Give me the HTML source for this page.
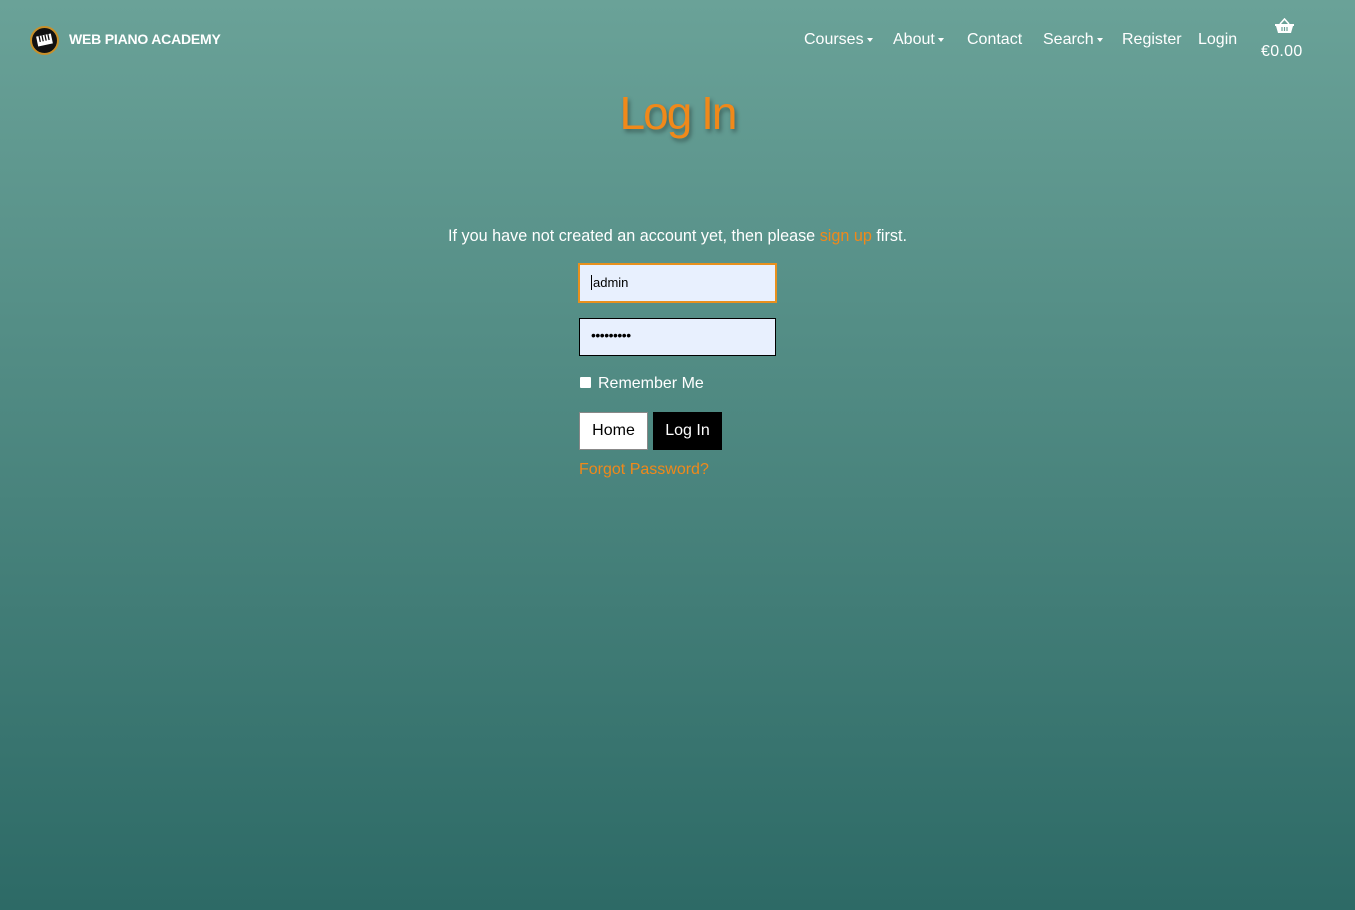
<!DOCTYPE html>
<html><head><meta charset="utf-8"><style>
html,body{margin:0;padding:0;}
body{width:1355px;height:910px;overflow:hidden;background:linear-gradient(#6aa298 0%,#2d6a66 100%);font-family:"Liberation Sans",sans-serif;color:#fff;position:relative;}
.a{position:absolute;white-space:nowrap;}
.nav{font-size:16px;top:31px;}
.caret{display:inline-block;border-top:4px solid #fff;border-left:3.5px solid transparent;border-right:3.5px solid transparent;vertical-align:middle;margin-left:3px;}
</style></head><body>
<svg class="a" style="left:30px;top:26px" width="29" height="29" viewBox="0 0 29 29">
<circle cx="14.5" cy="14.5" r="13.5" fill="#111" stroke="#c8902a" stroke-width="2"/>
<rect x="7" y="9" width="15" height="10" fill="#fff" transform="rotate(-12 14.5 14)"/>
<g stroke="#111" stroke-width="1.3" transform="rotate(-12 14.5 14)"><line x1="10" y1="9" x2="10" y2="15"/><line x1="13" y1="9" x2="13" y2="15"/><line x1="16" y1="9" x2="16" y2="15"/><line x1="19" y1="9" x2="19" y2="15"/></g>
</svg>
<div class="a" style="left:69px;top:31px;font-weight:bold;font-size:14px;letter-spacing:-0.2px">WEB PIANO ACADEMY</div>
<div class="a nav" style="left:804px">Courses<span class="caret"></span></div>
<div class="a nav" style="left:893px">About<span class="caret"></span></div>
<div class="a nav" style="left:967px">Contact</div>
<div class="a nav" style="left:1043px">Search<span class="caret"></span></div>
<div class="a nav" style="left:1122px">Register</div>
<div class="a nav" style="left:1198px">Login</div>
<svg class="a" style="left:1275px;top:18px" width="19" height="16" viewBox="0 0 19 16"><path d="M5 6 L9.5 1 L14 6" stroke="#fff" stroke-width="1.6" fill="none"/><path d="M0 6 H19 V8 H18 L16 15 H3 L1 8 H0Z" fill="#fff"/><g stroke="#6aa298" stroke-width="1.2"><line x1="7" y1="9" x2="7" y2="13"/><line x1="9.5" y1="9" x2="9.5" y2="13"/><line x1="12" y1="9" x2="12" y2="13"/></g></svg>
<div class="a" style="left:1261px;top:43px;font-size:16px;letter-spacing:0.3px">€0.00</div>
<div class="a" style="left:0;width:1355px;text-align:center;top:86px;font-size:46px;color:#f0891a;text-shadow:2px 3px 4px rgba(0,0,0,.35);letter-spacing:-2px">Log In</div>
<div class="a" style="left:0;width:1355px;text-align:center;top:227px;font-size:16.2px">If you have not created an account yet, then please <span style="color:#f0891a">sign up</span> first.</div>
<div class="a" style="left:578px;top:263px;width:195px;height:36px;background:#e8f0fe;border:2px solid #e8901d"></div>
<div class="a" style="left:591px;top:275px;font-size:13px;color:#000;border-left:1px solid #000;padding-left:1px">admin</div>
<div class="a" style="left:579px;top:318px;width:195px;height:36px;background:#e8f0fe;border:1px solid #000"></div>
<div class="a" style="left:591px;top:327px;font-size:14px;color:#000;letter-spacing:-0.5px">•••••••••</div>
<div class="a" style="left:580px;top:377px;width:11px;height:11px;background:#fff;border-radius:1px"></div>
<div class="a" style="left:598px;top:375px;font-size:16px">Remember Me</div>
<div class="a" style="left:579px;top:412px;width:67px;height:36px;background:#fff;border:1px solid #888;color:#000;font-size:16px;line-height:36px;text-align:center">Home</div>
<div class="a" style="left:653px;top:412px;width:69px;height:38px;background:#000;color:#fff;font-size:16px;line-height:38px;text-align:center">Log In</div>
<div class="a" style="left:579px;top:461px;font-size:16px;color:#f0891a">Forgot Password?</div>
</body></html>
